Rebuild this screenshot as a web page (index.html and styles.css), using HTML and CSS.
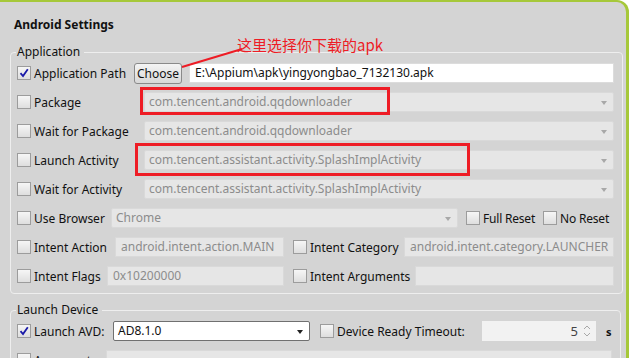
FILE: index.html
```html
<!DOCTYPE html>
<html lang="zh">

<head>
    <meta charset="UTF-8">
    <title>Android Settings</title>
    <link rel="stylesheet" href="styles.css">
</head>

<body>
    <div class="window">
        <!-- 标注层 -->
        <svg class="note-line" width="260" height="80" viewBox="0 0 260 80">
            <line x1="182" y1="65" x2="242" y2="47" stroke="#ee1c25" stroke-width="2" />
        </svg>
        <div class="note">这里选择你下载的apk</div>
        <div class="mark mark-pkg"></div>
        <div class="mark mark-act"></div>

        <h1>Android Settings</h1>

        <fieldset class="group">
            <legend>Application</legend>
            <div class="row">
                <label class="check w-path"><span class="box on"><svg width="10" height="10" viewBox="0 0 10 10"><path d="M1.5 5.2 L4 8 L8.8 1.2" fill="none" stroke="#1a1aa8" stroke-width="1.8" /></svg></span>Application Path</label>
                <button class="btn">Choose</button>
                <div class="field">E:\Appium\apk\yingyongbao_7132130.apk</div>
            </div>
            <div class="row">
                <label class="check w-wide"><span class="box"></span>Package</label>
                <div class="combo">com.tencent.android.qqdownloader</div>
            </div>
            <div class="row">
                <label class="check w-wide"><span class="box"></span>Wait for Package</label>
                <div class="combo">com.tencent.android.qqdownloader</div>
            </div>
            <div class="row">
                <label class="check w-wide"><span class="box"></span>Launch Activity</label>
                <div class="combo">com.tencent.assistant.activity.SplashImplActivity</div>
            </div>
            <div class="row">
                <label class="check w-wide"><span class="box"></span>Wait for Activity</label>
                <div class="combo">com.tencent.assistant.activity.SplashImplActivity</div>
            </div>
            <div class="row">
                <label class="check w-browser"><span class="box"></span>Use Browser</label>
                <div class="combo browser">Chrome</div>
                <label class="check side"><span class="box"></span>Full Reset</label>
                <label class="check side"><span class="box"></span>No Reset</label>
            </div>
            <div class="row">
                <div class="half">
                    <label class="check w-action"><span class="box"></span>Intent Action</label>
                    <div class="field off">android.intent.action.MAIN</div>
                </div>
                <label class="check w-cat"><span class="box"></span>Intent Category</label>
                <div class="field off">android.intent.category.LAUNCHER</div>
            </div>
            <div class="row">
                <div class="half">
                    <label class="check w-flags"><span class="box"></span>Intent Flags</label>
                    <div class="field off">0x10200000</div>
                </div>
                <label class="check w-args"><span class="box"></span>Intent Arguments</label>
                <div class="field off"></div>
            </div>
        </fieldset>

        <fieldset class="group">
            <legend>Launch Device</legend>
            <div class="row">
                <label class="check w-avd"><span class="box on"><svg width="10" height="10" viewBox="0 0 10 10"><path d="M1.5 5.2 L4 8 L8.8 1.2" fill="none" stroke="#1a1aa8" stroke-width="1.8" /></svg></span>Launch AVD:</label>
                <div class="select">AD8.1.0</div>
                <label class="check w-timeout"><span class="box"></span>Device Ready Timeout:</label>
                <div class="spinner">
                    <span class="num">5</span>
                    <svg width="10" height="16" viewBox="0 0 10 16"><path d="M2 6 L5 3 L8 6 M2 10 L5 13 L8 10" fill="none" stroke="#a8a8a8" stroke-width="1" /></svg>
                </div>
                <span class="unit">s</span>
            </div>
            <div class="row">
                <label class="check w-args2"><span class="box"></span>Arguments</label>
                <div class="field off"></div>
            </div>
        </fieldset>
    </div>
</body>

</html>
```

FILE: styles.css
```css
body {
    margin: 0;
    background: #ffffff;
    font-family: 'Noto Sans', 'Noto Sans CJK SC', sans-serif;
    font-size: 12px;
    color: #111;
    overflow: hidden;
}

.window {
    position: relative;
    width: 626px;
    height: 400px;
    background: #d4d4d4;
    border-top: 2px solid #a6c83a;
    border-right: 3px solid #a6c83a;
    border-top-right-radius: 12px;
}

h1 {
    margin: 15px 0 0 14px;
    font-size: 12px;
    line-height: 16px;
    font-weight: bold;
}

.group {
    margin: 11px 5px 0 10px;
    padding: 3px 8px 7px 6px;
    border: 1px solid #eeeeee;
    border-radius: 4px;
}

.group + .group {
    margin-top: 8px;
}

legend {
    padding: 0 4px 0 1px;
    margin-left: -1px;
    line-height: 16px;
}

.row {
    display: flex;
    align-items: center;
    height: 20px;
    margin-bottom: 9px;
}

.row:last-child {
    margin-bottom: 0;
}

.check {
    display: flex;
    align-items: center;
    flex-shrink: 0;
    white-space: nowrap;
}

.box {
    display: inline-flex;
    align-items: center;
    justify-content: center;
    width: 12px;
    height: 12px;
    margin-right: 3px;
    border: 1px solid #9c9c9c;
    background: linear-gradient(#f6f6f6, #dedede);
}

.w-path { width: 117px; }
.w-wide { width: 127px; }
.w-browser { width: 94px; }
.w-action { width: 98px; }
.w-flags { width: 90px; }
.w-cat { width: 111px; margin-left: 9px; }
.w-args { width: 122px; margin-left: 9px; }
.w-avd { width: 96px; }
.w-timeout { width: 162px; margin-left: 10px; }
.w-args2 { width: 89px; }

.side {
    margin-left: 8px;
    letter-spacing: -0.2px;
}

.half {
    display: flex;
    align-items: center;
    width: 267px;
    flex-shrink: 0;
}

.btn {
    width: 48px;
    height: 21px;
    margin-right: 7px;
    padding: 0;
    font: inherit;
    color: #111;
    border: 1px solid #8a8a8a;
    border-radius: 3px;
    background: linear-gradient(#f4f4f4, #d8d8d8);
}

.field {
    flex: 1;
    height: 20px;
    box-sizing: border-box;
    padding: 0 5px;
    line-height: 18px;
    background: #ffffff;
    border: 1px solid #dcdcdc;
    white-space: nowrap;
    overflow: hidden;
}

.field.off {
    background: #e6e6e6;
    border-color: #d9d9d9;
    color: #8c8c8c;
}

.combo {
    position: relative;
    flex: 1;
    height: 20px;
    box-sizing: border-box;
    padding: 0 4px;
    line-height: 18px;
    background: #e6e6e6;
    border: 1px solid #d9d9d9;
    border-radius: 2px;
    color: #8c8c8c;
    white-space: nowrap;
}

.combo::after {
    content: '';
    position: absolute;
    right: 6px;
    top: 8px;
    border-left: 3px solid transparent;
    border-right: 3px solid transparent;
    border-top: 4px solid #a8a8a8;
}

.combo.browser {
    flex: none;
    width: 347px;
}

.select {
    position: relative;
    width: 197px;
    height: 20px;
    box-sizing: border-box;
    padding: 0 4px;
    line-height: 18px;
    background: #ffffff;
    border: 1px solid #707070;
    border-radius: 2px;
}

.select::after {
    content: '';
    position: absolute;
    right: 6px;
    top: 8px;
    border-left: 3px solid transparent;
    border-right: 3px solid transparent;
    border-top: 4px solid #222;
}

.spinner {
    display: flex;
    align-items: center;
    justify-content: flex-end;
    width: 114px;
    height: 20px;
    box-sizing: border-box;
    padding-right: 4px;
    background: #f2f2f2;
    color: #444;
}

.spinner .num {
    margin-right: 4px;
    font-size: 13px;
}

.unit {
    margin-left: 10px;
    font-weight: bold;
    font-size: 11px;
}

.note-line {
    position: absolute;
    left: 0;
    top: 0;
}

.note {
    position: absolute;
    left: 237px;
    top: 33px;
    font-family: 'Noto Sans CJK SC', sans-serif;
    font-size: 15px;
    line-height: 20px;
    color: #ee1c25;
}

.mark {
    position: absolute;
    box-sizing: border-box;
    border: 3px solid #ee1c25;
    z-index: 2;
}

.mark-pkg {
    left: 140px;
    top: 85px;
    width: 250px;
    height: 28px;
}

.mark-act {
    left: 135px;
    top: 141px;
    width: 335px;
    height: 33px;
}
```
